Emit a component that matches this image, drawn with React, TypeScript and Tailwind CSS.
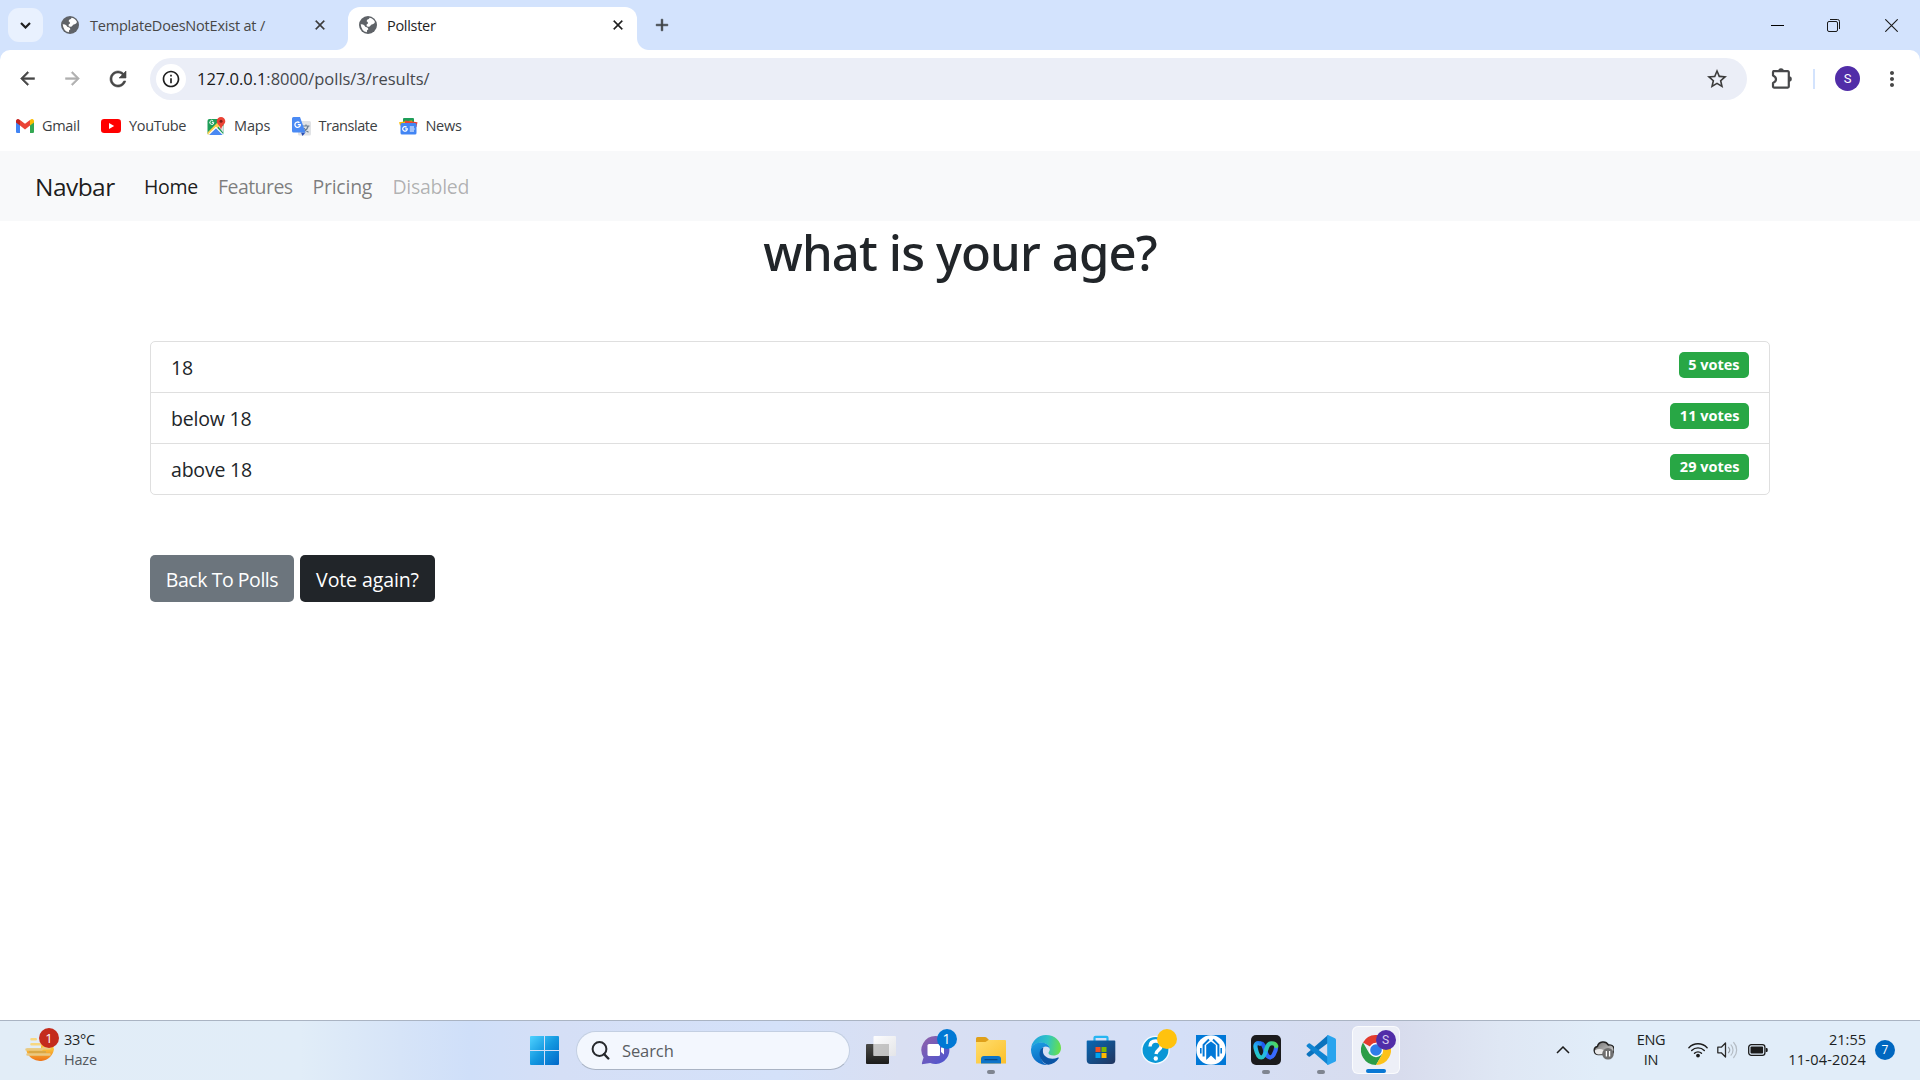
import type { ReactNode } from "react";
import { MdInfoOutline, MdStarOutline, MdMoreVert } from "react-icons/md";

/* ---------- Browser icons ---------- */

const Glyph = ({ d, className }: { d: string; className: string }) => (
  <svg viewBox="0 0 24 24" fill="currentColor" stroke="currentColor" strokeWidth="0.6" className={className}>
    <path d={d} />
  </svg>
);

const BACK = "M20 11H7.830l5.590-5.590L12 4l-8 8 8 8 1.410-1.410L7.830 13H20v-2z";
const FORWARD = "M12 4l-1.410 1.410L16.170 11H4v2h12.170l-5.580 5.590L12 20l8-8z";
const REFRESH =
  "M17.650 6.350C16.200 4.900 14.210 4 12 4c-4.420 0-7.990 3.580-7.990 8s3.570 8 7.990 8c3.730 0 6.840-2.550 7.730-6h-2.080c-.82 2.330-3.040 4-5.650 4-3.310 0-6-2.690-6-6s2.690-6 6-6c1.660 0 3.140.69 4.220 1.780L13 11h7V4l-2.350 2.350z";
const CLOSE = "M19 6.410L17.590 5 12 10.590 6.410 5 5 6.410 10.590 12 5 17.590 6.410 19 12 13.410 17.590 19 19 17.590 13.410 12z";
const PLUS = "M19 13h-6v6h-2v-6H5v-2h6V5h2v6h6v2z";

const GlobeIcon = () => (
  <svg width="18" height="18" viewBox="0 0 18 18">
    <circle cx="9" cy="9" r="9" fill="#5f6368" />
    <path
      d="M10.500 1.800c2.600.5 4.600 2 5.500 4.200q-.6 2-2.400 2.200-1.800.2-2.200 1.600-.6 1.200-2.400.9-1.600-.2-1.500-1.800.2-1.300 1.600-1.500Q9 5.800 7.600 5.200q.2-1.800 1.700-1.900.9-.3 1.200-1.500z"
      fill="#fff"
    />
    <path d="M1.700 8.200Q4 8 5.500 9.500q.4 1.600 2.200 1.800 1.800.4 1.600 2.200-1.300.4-1.400 1.600l.1 1.100Q2.300 15.200 1.700 8.200z" fill="#fff" />
  </svg>
);

const GmailIcon = () => (
  <svg width="18" height="14" viewBox="0 0 18 14">
    <path d="M0 2v10.700C0 13.400.6 14 1.300 14H4V5z" fill="#4285f4" />
    <path d="M18 2v10.700c0 .7-.6 1.300-1.300 1.300H14V5z" fill="#34a853" />
    <path d="M14 1v5.600l4-3.100V2c0-1.700-1.900-2.600-3.200-1.600z" fill="#fbbc04" />
    <path d="M4 6.600V1l5 3.800L14 1v5.600l-5 3.900z" fill="#ea4335" />
    <path d="M0 2v1.500l4 3.100V1L3.200.4C1.900-.6 0 .3 0 2z" fill="#c5221f" />
  </svg>
);

const YouTubeIcon = () => (
  <svg width="20" height="14" viewBox="0 0 20 14">
    <rect width="20" height="14" rx="3.200" fill="#ff0000" />
    <path d="M8 4l5.200 3L8 10z" fill="#fff" />
  </svg>
);

const MapsIcon = () => (
  <svg width="19" height="19" viewBox="0 0 19 19">
    <rect x="0.500" y="2" width="16" height="16" rx="2" fill="#1e9e58" />
    <path d="M11 9l5.500 7V9z" fill="#dfe1e5" />
    <path d="M.5 15.500L14 2h2.500v3L3 18H1.500Q.5 17.500.5 15.500z" fill="#fcd04b" />
    <path d="M9 10.500l7.300 7.400H2z" fill="#4a89f3" />
    <path d="M9 10.500l7 7.200M9 10.500L1.500 17.700" stroke="#fff" strokeWidth="1.100" />
    <path d="M6.800 5.400H4.900M6.200 4A2 2 0 1 0 6.800 5.600" fill="none" stroke="#fff" strokeWidth="1" />
    <path d="M14 0a4.300 4.300 0 0 0-4.300 4.300C9.700 7.500 13.200 8 14 13c.8-5 4.300-5.500 4.300-8.700A4.300 4.300 0 0 0 14 0z" fill="#ea4335" />
    <circle cx="14" cy="4.300" r="1.500" fill="#7f1d16" />
  </svg>
);

const TranslateIcon = () => (
  <svg width="19" height="19" viewBox="0 0 19 19">
    <rect x="6" y="4" width="13" height="14.500" rx="1.500" fill="#e1e3e6" />
    <path d="M10.500 9h7M14 7.500V9m2.200 0c-.6 2.500-2.500 4.500-4.500 5.500M12 11c1 2 2.500 3.200 4.500 4.200" fill="none" stroke="#6b7f93" strokeWidth="1.200" />
    <path d="M9 15.500h4.500L10.500 19z" fill="#2a4fb3" />
    <path d="M1.500 0H8l5.500 15.500h-12A1.500 1.500 0 0 1 0 14V1.500A1.500 1.500 0 0 1 1.500 0z" fill="#4a8af4" />
    <path d="M5.800 7.700h2.500a2.700 2.700 0 1 1-.8-1.900" fill="none" stroke="#fff" strokeWidth="1.300" />
  </svg>
);

const NewsIcon = () => (
  <svg width="19" height="17" viewBox="0 0 19 17">
    <rect x="4" y="0" width="11" height="8" rx="1" fill="#1e9e58" />
    <path d="M0 4.200L13 2.500l1 5H1z" fill="#fbbc04" />
    <path d="M6 2.500l12.500 1.800L17.500 9H6z" fill="#ea4335" />
    <rect x="1.500" y="5" width="16" height="11.500" rx="1.500" fill="#4285f4" />
    <path d="M6.200 10.900h2.100a2.300 2.300 0 1 1-.7-1.700" fill="none" stroke="#fff" strokeWidth="1.200" />
    <path d="M10.800 9h4.200M10.800 11h4.800M10.800 13h4.200" stroke="#fff" strokeWidth="1.200" />
  </svg>
);

const PuzzleIcon = () => (
  <svg width="22" height="22" viewBox="0 0 22 22">
    <path d="M7.200 3a2.800 2.800 0 0 1 5.600 0z M18 8.200a2.800 2.800 0 0 1 0 5.600z" fill="#47484a" />
    <path
      d="M2.400 3.200h14.400a1 1 0 0 1 1 1v14.400a1 1 0 0 1-1 1H3a1 1 0 0 1-1-1v-3.600q3-1.300 3-3.700T2 7.600V4.200a1 1 0 0 1 1-1z"
      fill="none"
      stroke="#47484a"
      strokeWidth="2.200"
      strokeLinejoin="round"
    />
  </svg>
);

/* ---------- Taskbar icons ---------- */

const WindowsIcon = () => (
  <svg width="29" height="29" viewBox="0 0 29 29">
    <defs>
      <linearGradient id="win" gradientUnits="userSpaceOnUse" x1="0" y1="0" x2="29" y2="29">
        <stop offset="0" stopColor="#4fd2ff" />
        <stop offset=".5" stopColor="#1498e0" />
        <stop offset="1" stopColor="#0067c8" />
      </linearGradient>
    </defs>
    <path
      d="M1 0h13v14H0V1a1 1 0 0 1 1-1zM15 0H28a1 1 0 0 1 1 1v13H15zM0 15h14V29H1a1 1 0 0 1-1-1zM15 15H29V28a1 1 0 0 1-1 1H15z"
      fill="url(#win)"
    />
  </svg>
);

const SearchIcon = () => (
  <svg width="19" height="19" viewBox="0 0 19 19">
    <circle cx="8.500" cy="8" r="6.900" fill="none" stroke="#26282c" strokeWidth="2" />
    <path d="M13 13l4.300 4.500" stroke="#26282c" strokeWidth="2.400" strokeLinecap="round" />
  </svg>
);

const TaskViewIcon = () => (
  <svg width="30" height="30" viewBox="0 0 30 30">
    <defs>
      <linearGradient id="tvd" x1="0" y1="0" x2="0" y2="1">
        <stop offset="0" stopColor="#4a4a48" />
        <stop offset="1" stopColor="#1c1c1b" />
      </linearGradient>
      <linearGradient id="tvl" x1="0" y1="0" x2="1" y2="1">
        <stop offset="0" stopColor="#fff" stopOpacity=".95" />
        <stop offset="1" stopColor="#e6e6e6" stopOpacity=".85" />
      </linearGradient>
    </defs>
    <rect x="0" y="9" width="23" height="20" rx="1" fill="url(#tvd)" />
    <rect x="7.500" y="1" width="22.500" height="20" rx="1" fill="url(#tvl)" />
    <rect x="7.500" y="9" width="15.500" height="12" fill="#b9b9b9" opacity=".75" />
  </svg>
);

const ChatIcon = () => (
  <svg width="30" height="30" viewBox="0 0 30 30">
    <defs>
      <linearGradient id="chat" x1="0" y1="0" x2="0.800" y2="1">
        <stop offset="0" stopColor="#9463a8" />
        <stop offset="1" stopColor="#4d54cf" />
      </linearGradient>
    </defs>
    <path d="M14.500 1a14 14 0 1 1-5.300 27L1 29.200Q.5 28.500 2.600 22.500A14 14 0 0 1 14.500 1z" fill="url(#chat)" />
    <rect x="6.500" y="9" width="12.500" height="12" rx="1.500" fill="#fff" />
    <path d="M20 13l3-2.500v9L20 17z" fill="#fff" />
  </svg>
);

const ExplorerIcon = () => (
  <svg width="30" height="30" viewBox="0 0 30 30">
    <defs>
      <linearGradient id="fold" x1="0" y1="0" x2="1" y2="1">
        <stop offset="0" stopColor="#ffdd6e" />
        <stop offset="1" stopColor="#fcc02a" />
      </linearGradient>
    </defs>
    <path d="M1.500 2H9q1 0 1.800.8L13 5v4H0V3.500A1.500 1.500 0 0 1 1.500 2z" fill="#dfa01a" />
    <path d="M0 7h9.500l3-2H29a1 1 0 0 1 1 1v22.500H0z" fill="url(#fold)" />
    <path d="M5 28.500V24a3 3 0 0 1 3-3h14a3 3 0 0 1 3 3v4.500z" fill="#0e74c8" />
    <path d="M9 24.700h12" stroke="#0b4a86" strokeWidth="1.200" strokeLinecap="round" />
  </svg>
);

const EdgeIcon = () => (
  <svg width="30" height="30" viewBox="0 0 30 30">
    <defs>
      <linearGradient id="edge1" x1="0" y1="0.300" x2="1" y2="0.400">
        <stop offset="0" stopColor="#1f9fe0" />
        <stop offset=".55" stopColor="#2fc4c4" />
        <stop offset="1" stopColor="#68e04a" />
      </linearGradient>
      <linearGradient id="edge2" x1="0.200" y1="0" x2="0.500" y2="1">
        <stop offset="0" stopColor="#1b9de2" />
        <stop offset="1" stopColor="#0a66c2" />
      </linearGradient>
    </defs>
    <path d="M0 14A15 15 0 0 1 15 0c9 0 15 6.300 15 13 0 5-3.500 7.500-7.500 7.500-3.300 0-5-1.200-5-2.400 0-1 1.300-1.600 1.300-4 0-3-3.500-6.300-8.300-6.300C5 7.800 1 10 0 14z" fill="url(#edge1)" />
    <path d="M0 14C1 9.500 5.500 7.500 10 7.500c5 0 8.800 3.200 8.800 6.500-1-1.600-2.400-2.400-4-2.400-3.600 0-5.500 3.600-5.500 7.400C9.300 25 13.500 30 17 29.800A15 15 0 0 1 0 15z" fill="url(#edge2)" />
    <path d="M12.500 12.200C8 14 7.800 20 9.800 23.800 12 28 16 30 17.500 29.700c4-.5 8-3 10.200-6.500.4-.7-.2-1-.8-.7-7 3.300-15-.3-15-6.500 0-1.500.1-2.700.6-3.800z" fill="#0b55a5" />
  </svg>
);

const StoreIcon = () => (
  <svg width="30" height="30" viewBox="0 0 30 30">
    <defs>
      <linearGradient id="store" x1="0" y1="0" x2="1" y2="1">
        <stop offset="0" stopColor="#0868b4" />
        <stop offset="1" stopColor="#22355e" />
      </linearGradient>
    </defs>
    <path d="M8.500 6.500V2.800q0-1 1-1h11q1 0 1 1v3.700" fill="none" stroke="#27b6f2" strokeWidth="2.200" />
    <path d="M1.500 5.500h27a.8.8 0 0 1 .8.800V25a4 4 0 0 1-4 4H4.700a4 4 0 0 1-4-4V6.300a.8.8 0 0 1 .8-.8z" fill="url(#store)" />
    <rect x="9.500" y="12" width="5" height="5" fill="#f25022" />
    <rect x="15.500" y="12" width="5" height="5" fill="#7fba00" />
    <rect x="9.500" y="18" width="5" height="5" fill="#00a4ef" />
    <rect x="15.500" y="18" width="5" height="5" fill="#ffb900" />
  </svg>
);

const HelpIcon = () => (
  <svg width="30" height="30" viewBox="0 0 30 30">
    <circle cx="14.500" cy="15" r="14.300" fill="#f4fbff" />
    <circle cx="14.500" cy="15" r="12.900" fill="#0a97d6" />
    <path d="M9 11.500C9.200 7.800 11.500 6 14.700 6c3.300 0 5.500 2 5.500 4.700 0 4-4.900 4.300-5.200 8.300" fill="none" stroke="#fff" strokeWidth="3.400" />
    <circle cx="14.800" cy="23.500" r="2.200" fill="#fff" />
  </svg>
);

const BookmarkAppIcon = () => (
  <svg width="30" height="30" viewBox="0 0 30 30">
    <rect width="30" height="30" fill="#0078d7" />
    <circle cx="15" cy="15" r="14.700" fill="#fff" />
    <path d="M10.200 10L15 6.500l4.800 3.500V25L15 20.500 10.200 25z" fill="#0078d7" />
    <path d="M7.600 21.500V9.800L13 4.500M22.400 21.500V9.800L17 4.500" fill="none" stroke="#0078d7" strokeWidth="2" />
    <path d="M4.800 18.500V13M25.200 18.500V13" fill="none" stroke="#0078d7" strokeWidth="1.600" />
  </svg>
);

const WebexIcon = () => (
  <svg width="30" height="30" viewBox="0 0 30 30">
    <defs>
      <linearGradient id="wx1" gradientUnits="userSpaceOnUse" x1="15" y1="7" x2="5" y2="23">
        <stop offset="0" stopColor="#1a5cf0" />
        <stop offset=".5" stopColor="#25b4f0" />
        <stop offset="1" stopColor="#26d0b0" />
      </linearGradient>
      <linearGradient id="wx2" gradientUnits="userSpaceOnUse" x1="12" y1="8" x2="26" y2="16">
        <stop offset="0" stopColor="#1f58f0" />
        <stop offset="1" stopColor="#3a6cff" />
      </linearGradient>
      <linearGradient id="wx3" gradientUnits="userSpaceOnUse" x1="15" y1="10" x2="26" y2="8">
        <stop offset="0" stopColor="#26c4c0" />
        <stop offset="1" stopColor="#52d858" />
      </linearGradient>
    </defs>
    <rect width="30" height="30" rx="5" fill="#1b1b1d" />
    <path d="M9 8.500C13.500 8 13.500 14 15 18c1.500 4.600 5.200 5.800 7.500 2 1.600-2.600 2.600-5.500 2.700-8" fill="none" stroke="url(#wx2)" strokeWidth="4.200" strokeLinecap="round" />
    <path d="M9 8.500C6 7.300 3.800 9 4.600 13c.8 3.800 2.400 9.500 5.600 9.500 3 0 4.200-4.500 5-8" fill="none" stroke="url(#wx1)" strokeWidth="4.200" strokeLinecap="round" />
    <path d="M15.200 14.500C16.300 10.500 17.500 8.500 20 8.300c2.500-.2 4.500.7 5.200 2.700" fill="none" stroke="url(#wx3)" strokeWidth="4.200" strokeLinecap="round" />
  </svg>
);

const VsCodeIcon = () => (
  <svg width="30" height="30" viewBox="0 0 30 30">
    <path d="M22 0L.8 18.500q-.6.700 0 1.400l1.800 1.600q.7.500 1.400 0L22 8z" fill="#0a72bd" />
    <path d="M22 30L.8 11.500q-.6-.7 0-1.400l1.800-1.600q.7-.5 1.400 0L22 22z" fill="#0f84d2" />
    <path d="M22 0l7 3.200q1 .5 1 1.600v20.400q0 1.100-1 1.600L22 30q-.8 0-.8-1V1q0-1 .8-1z" fill="#29a4ee" />
  </svg>
);

const ChromeIcon = () => (
  <svg width="30" height="30" viewBox="0 0 30 30">
    <path d="M15 15L2 7.500A15 15 0 0 1 28 7.500H15z" fill="#e33b2e" />
    <path d="M15 15l6.500 3.750L15 30A15 15 0 0 1 2 7.500l6.500 11.250z" fill="#2b9d48" />
    <path d="M15 7.500h13A15 15 0 0 1 15 30l6.500-11.250z" fill="#fcc21b" />
    <circle cx="15" cy="15" r="7.200" fill="#fff" />
    <circle cx="15" cy="15" r="5.800" fill="#2f7de9" />
  </svg>
);

const HazeIcon = () => (
  <svg width="30" height="26" viewBox="0 0 30 26">
    <defs>
      <linearGradient id="haze" x1="0" y1="0" x2="0" y2="1">
        <stop offset="0" stopColor="#fbc43c" />
        <stop offset="1" stopColor="#ee7318" />
      </linearGradient>
    </defs>
    <path d="M2 11.500h27A14 13.500 0 0 1 1.500 14z" fill="url(#haze)" />
    <path d="M16 7h12.500v6H16z" fill="#fbbf36" />
    <path d="M6.500 2.300h4.200M6.500 7.300h11" stroke="#f7d780" strokeWidth="2.600" strokeLinecap="round" />
    <path d="M1.500 12.500h15l2-1.200h6M2.500 17.500h22" fill="none" stroke="#e8c983" strokeWidth="2.500" strokeLinecap="round" />
    <path d="M4 15h17" stroke="#d9a845" strokeWidth="2" />
  </svg>
);

const CloudIcon = () => (
  <svg width="21" height="20" viewBox="0 0 21 20">
    <defs>
      <linearGradient id="cl" x1="0" y1="0" x2="1" y2="1">
        <stop offset="0" stopColor="#707070" />
        <stop offset="1" stopColor="#d8d8d8" />
      </linearGradient>
    </defs>
    <path d="M5 14.500a4 4 0 0 1-.6-7.900 6 6 0 0 1 11-1.600 4.600 4.600 0 0 1 2 9.300z" fill="url(#cl)" stroke="#222" strokeWidth="1.500" />
    <path d="M1.800 10.500q7-4 13 3.500L5 14.500q-3-.5-3.200-4z" fill="#e9e9e9" />
    <circle cx="15" cy="13.800" r="5.800" fill="#6f6f6f" />
    <path d="M13.400 11v5.600M16.600 11v5.600" stroke="#fff" strokeWidth="1.300" />
  </svg>
);

const WifiIcon = () => (
  <svg width="20" height="16" viewBox="0 0 20 16">
    <g fill="none" stroke="#1c1c1c" strokeWidth="1.400" strokeLinecap="round">
      <path d="M.9 5.700a12.600 12.600 0 0 1 18.200 0" />
      <path d="M3.700 8.600a8.700 8.700 0 0 1 12.600 0" />
      <path d="M6.500 11.300a4.900 4.900 0 0 1 7 0" />
    </g>
    <circle cx="10" cy="13.600" r="1.900" fill="#1c1c1c" />
  </svg>
);

const VolumeIcon = () => (
  <svg width="21" height="18" viewBox="0 0 21 18">
    <path d="M.8 6.200h3.500L8.500 2v14L4.300 11.800H.8z" fill="none" stroke="#2a2a2a" strokeWidth="1.300" strokeLinejoin="round" />
    <path d="M11.500 6.300a4 4 0 0 1 0 5.400" fill="none" stroke="#999fa6" strokeWidth="1.200" strokeLinecap="round" />
    <path d="M14 3.900a7.500 7.500 0 0 1 0 10.200M16.700 1.500a11 11 0 0 1 0 15" fill="none" stroke="#b5bcc4" strokeWidth="1.200" strokeLinecap="round" />
  </svg>
);

const BatteryIcon = () => (
  <svg width="20" height="12" viewBox="0 0 20 12">
    <rect x=".7" y=".7" width="16.200" height="10.600" rx="2.600" fill="none" stroke="#1c1c1c" strokeWidth="1.300" />
    <rect x="2.500" y="2.500" width="12.600" height="7" rx="1" fill="#1c1c1c" />
    <path d="M17.800 4h.7a1.200 1.200 0 0 1 1.200 1.200v1.600A1.200 1.200 0 0 1 18.500 8h-.7z" fill="#1c1c1c" />
  </svg>
);

/* ---------- Browser chrome ---------- */

const TabStrip = () => (
  <div className="flex h-[50px] bg-[#d3e3fd]">
    <div className="mt-2 ml-2 flex h-[34px] w-[35px] items-center justify-center rounded-[11px] bg-[#e9f1fe]">
      <svg width="11" height="7" viewBox="0 0 11 7">
        <path d="M1 1l4.500 4.500L10 1" fill="none" stroke="#1f1f1f" strokeWidth="2.200" />
      </svg>
    </div>
    <div className="mt-[7px] flex h-[36px] w-[305px] items-center pl-[18px]">
      <GlobeIcon />
      <span className="ml-[11px] w-[222px] pt-px text-[14.5px] tracking-[-0.2px] text-[#474747]">TemplateDoesNotExist at /</span>
      <Glyph d={CLOSE} className="size-4 text-[#3c3c3c]" />
    </div>
    <div className="relative mt-[7px] h-[43px] w-[289px] rounded-t-[12px] bg-white">
      <div className="absolute bottom-0 -left-3 size-3 bg-[radial-gradient(circle_at_0_0,#d3e3fd_11.5px,#fff_12.5px)]" />
      <div className="absolute -right-3 bottom-0 size-3 bg-[radial-gradient(circle_at_100%_0,#d3e3fd_11.5px,#fff_12.5px)]" />
      <div className="flex h-[36px] items-center pl-[11px]">
        <GlobeIcon />
        <span className="ml-[10px] w-[223px] pt-px text-[14.5px] tracking-[-0.3px] text-[#1f1f1f]">Pollster</span>
        <Glyph d={CLOSE} className="size-4 text-[#1f1f1f]" />
      </div>
    </div>
    <Glyph d={PLUS} className="mt-[15px] ml-[15px] size-5 text-[#3c4043]" />
    <div className="ml-auto flex items-center">
      <svg className="mr-[43px]" width="13" height="13" viewBox="0 0 13 13">
        <path d="M0 6.500h13" stroke="#000" />
      </svg>
      <svg className="mr-[45px]" width="13" height="13" viewBox="0 0 13 13">
        <rect x=".5" y="2.500" width="10" height="10" rx="1.500" fill="none" stroke="#1a1a1a" />
        <path d="M3 .5h7.500a2 2 0 0 1 2 2V10" fill="none" stroke="#1a1a1a" />
      </svg>
      <svg className="mr-[22px]" width="13" height="13" viewBox="0 0 13 13">
        <path d="M.3.300l12.400 12.400M12.700.3L.3 12.700" stroke="#1a1a1a" strokeWidth="1.100" />
      </svg>
    </div>
  </div>
);

const Toolbar = () => (
  <div className="bg-[#d3e3fd]">
    <div className="flex h-[57px] items-center rounded-t-[10px] bg-white">
      <Glyph d={BACK} className="ml-[17px] size-[21px] text-[#474747]" />
      <Glyph d={FORWARD} className="ml-[24px] size-[21px] text-[#b0b0b0]" />
      <Glyph d={REFRESH} className="ml-[23px] size-[24px] text-[#474747]" />
      <div className="ml-[20px] flex h-[42px] w-[1597px] items-center rounded-full bg-[#ebeef7] pl-[6px]">
        <div className="flex size-[30px] items-center justify-center rounded-full bg-white">
          <MdInfoOutline className="size-5 text-[#1f1f1f]" />
        </div>
        <span className="ml-[11px] pt-[2px] text-[16.5px] tracking-[-0.03px] text-[#45484d]">
          <span className="text-[#1a1a1a]">127.0.0.1</span>:8000/polls/3/results/
        </span>
        <MdStarOutline className="mr-[18px] ml-auto size-[24px] text-[#3c3c3c]" />
      </div>
      <div className="ml-[24px]">
        <PuzzleIcon />
      </div>
      <div className="ml-[20px] h-5 w-[2px] bg-[#d3e3fd]" />
      <div className="ml-[20px] flex size-[25px] items-center justify-center rounded-full bg-[#512da8] font-['Roboto'] text-[13px] text-white">S</div>
      <MdMoreVert className="ml-[20px] size-6 text-[#474747]" />
    </div>
  </div>
);

const Bookmark = ({ icon, label, width }: { icon: ReactNode; label: string; width: string }) => (
  <div className={`flex items-center gap-2 ${width}`}>
    {icon}
    <span>{label}</span>
  </div>
);

const Bookmarks = () => (
  <div className="flex h-[44px] items-start bg-white pl-4 text-[14.5px] text-[#3c4043]">
    <div className="flex h-[38px] items-center">
      <Bookmark icon={<GmailIcon />} label="Gmail" width="w-[85px] tracking-[-0.3px]" />
      <Bookmark icon={<YouTubeIcon />} label="YouTube" width="w-[106px] tracking-[-0.35px]" />
      <Bookmark icon={<MapsIcon />} label="Maps" width="w-[84.500px] tracking-[-0.15px]" />
      <Bookmark icon={<TranslateIcon />} label="Translate" width="w-[107px] tracking-[-0.45px]" />
      <Bookmark icon={<NewsIcon />} label="News" width="w-[80px] tracking-[-0.3px]" />
    </div>
  </div>
);

/* ---------- Page ---------- */

const Navbar = () => (
  <nav className="flex h-[70px] items-center bg-[#f8f9fa] pt-[2px] pl-[35px] text-[19.5px]">
    <span className="w-[109px] text-[24.5px] tracking-[-0.55px] text-black/90">Navbar</span>
    <span className="w-[74px] tracking-[-0.3px] text-black/90">Home</span>
    <span className="w-[94.500px] tracking-[-0.55px] text-black/50">Features</span>
    <span className="w-[80px] tracking-[-0.25px] text-black/50">Pricing</span>
    <span className="tracking-[-0.3px] text-black/30">Disabled</span>
  </nav>
);

const results = [
  { choice: "18", votes: "5 votes" },
  { choice: "below 18", votes: "11 votes" },
  { choice: "above 18", votes: "29 votes" },
];

const PollResults = () => (
  <main className="mx-[150px] text-[#212529]">
    <h1 className="h-[60px] text-center font-['Noto_Sans'] text-[49px] leading-[62px] font-medium tracking-[-0.85px]">what is your age?</h1>
    <ul className="mt-[60px] divide-y divide-[#dfdfdf] rounded-[5px] border border-[#dfdfdf]">
      {results.map((r) => (
        <li key={r.choice} className="box-content flex h-[50px] justify-between px-[20px]">
          <span className="text-[19.5px] leading-[52px] tracking-[-0.2px]">{r.choice}</span>
          <span className="mt-[10px] h-[26px] rounded-[5px] bg-[#28a745] px-[9.5px] text-[14.5px] leading-[25px] font-bold text-white">{r.votes}</span>
        </li>
      ))}
    </ul>
    <div className="mt-[60px] flex gap-[6px] text-[19.5px] leading-[50px] text-white">
      <button className="h-[47px] w-[144px] rounded-[5px] bg-[#6c757d] tracking-[-0.45px]">Back To Polls</button>
      <button className="h-[47px] w-[135px] rounded-[5px] bg-[#212529] tracking-[-0.1px]">Vote again?</button>
    </div>
  </main>
);

/* ---------- Taskbar ---------- */

const TaskItem = ({ children, badge, indicator, active }: { children: ReactNode; badge?: ReactNode; indicator?: string; active?: boolean }) => (
  <div className="flex w-[55px] justify-center">
    <div className={`relative flex size-[48px] items-center justify-center rounded-[6px] ${active ? "border border-white/70 bg-white/55" : ""}`}>
      {children}
      {badge && <div className="absolute top-[3px] right-[3px]">{badge}</div>}
      {indicator && (
        <div className="absolute inset-x-0 bottom-0 flex justify-center">
          <div className={`h-[4px] rounded-full ${indicator}`} />
        </div>
      )}
    </div>
  </div>
);

const Taskbar = () => (
  <footer className="flex h-[60px] items-center border-t border-[#aab4c3] bg-[linear-gradient(90deg,#e2edf7_0,#e1edf8_300px,#d6e4f8_400px,#cfdff9_470px,#d5dff6_560px,#d4e1f9_780px,#d9dff2_900px,#d4dff7_1180px,#d8dced_1400px,#dfe7f4_1500px,#e1edf9_1600px,#e1edf9_100%)] pb-px text-[14.5px] leading-5 text-[#1c1f23]">
    <div className="flex w-[517px] items-center pl-[25px]">
      <div className="relative">
        <HazeIcon />
        <div className="absolute -top-[9px] left-[14px] flex size-5 items-center justify-center rounded-full bg-[#c42b1c] text-[13px] text-white">1</div>
      </div>
      <div className="ml-[9px]">
        <div className="tracking-[-0.3px]">33°C</div>
        <div className="tracking-[-0.2px] text-[#54585e]">Haze</div>
      </div>
    </div>
    <TaskItem>
      <WindowsIcon />
    </TaskItem>
    <div className="mr-[3px] ml-[4px] flex h-[39px] w-[274px] items-center rounded-full border border-[#c3cfe2] border-b-[#a9b3c4] bg-[#f3f7fe] pl-[14px]">
      <SearchIcon />
      <span className="ml-[12px] pt-[2px] text-[16.5px] tracking-[-0.1px] text-[#5a5d62]">Search</span>
    </div>
    <TaskItem>
      <TaskViewIcon />
    </TaskItem>
    <TaskItem badge={<div className="flex size-5 items-center justify-center rounded-full bg-[#0078d4] text-[14px] text-white">1</div>}>
      <ChatIcon />
    </TaskItem>
    <TaskItem indicator="w-2 bg-[#7f8590]">
      <ExplorerIcon />
    </TaskItem>
    <TaskItem>
      <EdgeIcon />
    </TaskItem>
    <TaskItem>
      <StoreIcon />
    </TaskItem>
    <TaskItem badge={<div className="size-5 rounded-full bg-[#ffc20e]" />}>
      <HelpIcon />
    </TaskItem>
    <TaskItem>
      <BookmarkAppIcon />
    </TaskItem>
    <TaskItem indicator="w-2 bg-[#7f8590]">
      <WebexIcon />
    </TaskItem>
    <TaskItem indicator="w-2 bg-[#7f8590]">
      <VsCodeIcon />
    </TaskItem>
    <TaskItem
      active
      indicator="w-5 bg-[#0a78d4]"
      badge={<div className="flex size-5 items-center justify-center rounded-full bg-[#512da8] font-['Roboto'] text-[12px] text-[#d8cdf0]">S</div>}
    >
      <ChromeIcon />
    </TaskItem>
    <div className="mr-[25px] ml-auto flex items-center">
      <svg className="mr-[23px]" width="14" height="8" viewBox="0 0 14 8">
        <path d="M1 7l6-6 6 6" fill="none" stroke="#1c1c1c" strokeWidth="1.500" />
      </svg>
      <CloudIcon />
      <div className="ml-[13px] w-[48px] text-center tracking-[-0.3px]">
        <div>ENG</div>
        <div>IN</div>
      </div>
      <div className="ml-[13px] flex w-[82px] items-center">
        <WifiIcon />
        <div className="ml-[9px]">
          <VolumeIcon />
        </div>
        <div className="ml-[10px]">
          <BatteryIcon />
        </div>
      </div>
      <div className="ml-[17px] w-[79px] text-right">
        <div>21:55</div>
        <div className="tracking-[0.2px]">11-04-2024</div>
      </div>
      <div className="ml-[9px] flex size-5 items-center justify-center rounded-full bg-[#0067c0] text-[12px] text-white">7</div>
    </div>
  </footer>
);

export default function App() {
  return (
    <div className="flex h-[1080px] w-[1920px] flex-col overflow-hidden bg-white font-['Open_Sans','Noto_Sans',sans-serif] whitespace-nowrap">
      <TabStrip />
      <Toolbar />
      <Bookmarks />
      <Navbar />
      <div className="flex-1">
        <PollResults />
      </div>
      <Taskbar />
    </div>
  );
}
